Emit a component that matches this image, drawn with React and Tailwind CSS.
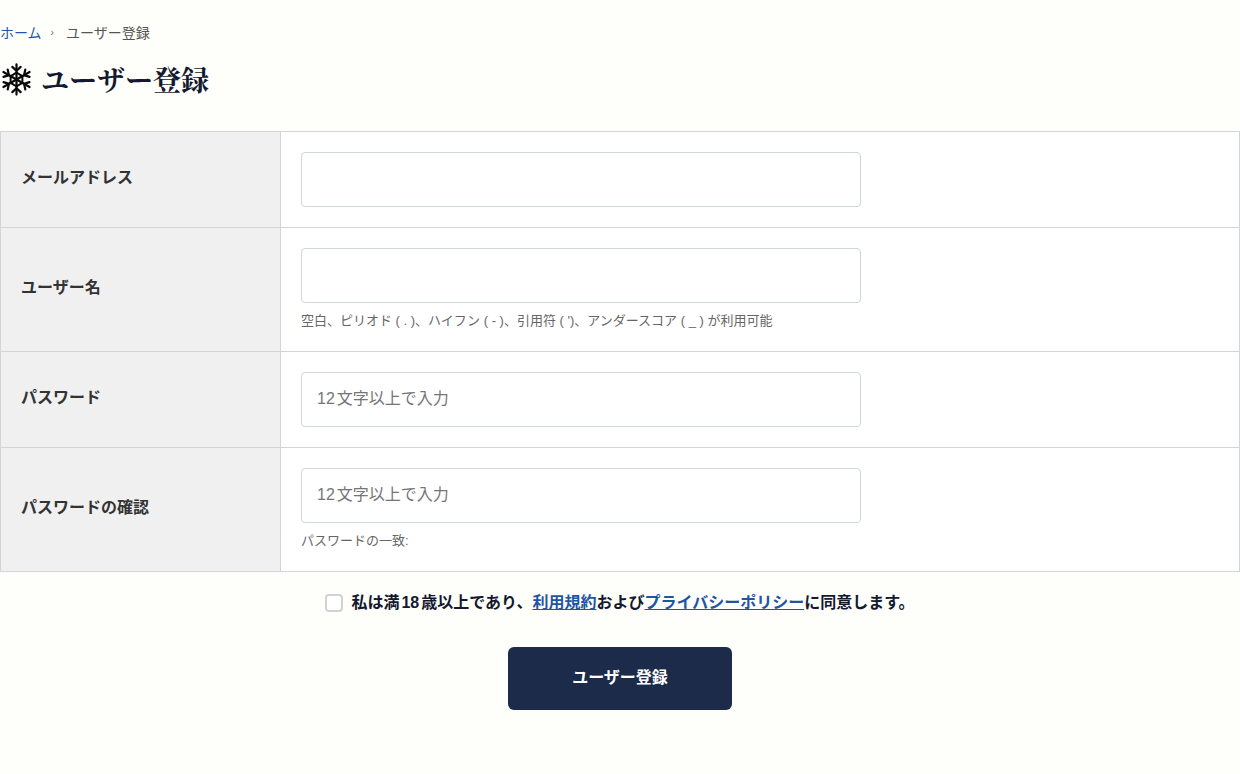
import React, { useState } from 'react';

const fields = [
  { id: 'email', label: 'メールアドレス', type: 'email' },
  {
    id: 'username',
    label: 'ユーザー名',
    type: 'text',
    hint: "空白、ピリオド ( . )、ハイフン ( - )、引用符 ( ')、アンダースコア ( _ ) が利用可能",
  },
  { id: 'password', label: 'パスワード', type: 'password', placeholder: '12文字以上で入力' },
  {
    id: 'passwordConfirm',
    label: 'パスワードの確認',
    type: 'password',
    placeholder: '12文字以上で入力',
    hint: 'パスワードの一致:',
  },
];

const arms = [0, 60, 120, 180, 240, 300];

const Snowflake = () => (
  <svg
    viewBox="0 0 33 34"
    className="h-[34px] w-[33px] shrink-0"
    fill="none"
    stroke="#0a0a0a"
    strokeWidth="2.2"
    strokeLinecap="round"
    aria-hidden="true"
  >
    {arms.map((angle) => (
      <g key={angle} transform={`rotate(${angle} 16.5 17.5)`}>
        <path d="M16.5 17.5V2.4" />
        <path d="M12.3 4.9 16.5 8.8 20.7 4.9" />
        <path d="M16.5 10.7 22.4 14.1" strokeWidth="2" />
      </g>
    ))}
  </svg>
);

const FieldRow = ({ field, value, onChange }) => (
  <tr>
    <th
      scope="row"
      className="w-[280px] border border-[#cfd6d8] bg-[#f0f0f0] px-5 pb-[3px] text-left align-middle font-bold text-[#333]"
    >
      <label htmlFor={field.id}>{field.label}</label>
    </th>
    <td className="border border-[#cfd6d8] bg-white p-5">
      <input
        id={field.id}
        type={field.type}
        value={value}
        placeholder={field.placeholder}
        onChange={(e) => onChange(field.id, e.target.value)}
        className="block h-[55px] w-full max-w-[560px] rounded border border-[#cfd6d8] bg-white px-[15px] pb-0.5 text-base placeholder:text-[#757575]"
      />
      {field.hint && <p className="mt-2 text-[13px] leading-5 text-[#666]">{field.hint}</p>}
    </td>
  </tr>
);

const App = () => {
  const [values, setValues] = useState({ email: '', username: '', password: '', passwordConfirm: '' });
  const [agreed, setAgreed] = useState(false);

  const handleChange = (id, value) => {
    setValues((prev) => ({ ...prev, [id]: value }));
  };

  return (
    <main className="min-h-screen bg-[#fefffb] pt-[23px] pb-16 font-['Liberation_Sans','Noto_Sans_CJK_JP',sans-serif] text-base text-[#14192f] [text-autospace:normal]">
      <nav aria-label="パンくず" className="flex items-center text-sm leading-5">
        <a href="#home" className="text-[#1f55a5]">ホーム</a>
        <span className="mr-3 ml-[9px] text-[10px] text-[#666]">›</span>
        <span className="text-[#555]">ユーザー登録</span>
      </nav>

      <h1 className="mt-4 flex items-center gap-2 font-['Noto_Serif_CJK_JP','Noto_Sans_CJK_JP',serif] text-[28px] leading-10 font-bold">
        <Snowflake />
        ユーザー登録
      </h1>

      <form onSubmit={(e) => e.preventDefault()} className="mt-8">
        <table className="w-full border-collapse">
          <tbody>
            {fields.map((field) => (
              <FieldRow key={field.id} field={field} value={values[field.id]} onChange={handleChange} />
            ))}
          </tbody>
        </table>

        <div className="mt-[19px] flex items-center justify-center gap-2 leading-6 font-semibold">
          <input
            id="agree"
            type="checkbox"
            checked={agreed}
            onChange={(e) => setAgreed(e.target.checked)}
            className="size-[18px] shrink-0 appearance-none rounded border-2 border-[#d0d3d6] bg-white checked:bg-[#1c2b4a]"
          />
          <label htmlFor="agree">
            私は満18歳以上であり、
            <a href="#terms" className="text-[#1f55a5] underline">利用規約</a>
            および
            <a href="#privacy" className="text-[#1f55a5] underline">プライバシーポリシー</a>
            に同意します。
          </label>
        </div>

        <div className="mt-8 flex justify-center">
          <button type="submit" className="h-[63px] rounded-md bg-[#1c2b4a] px-16 pb-0.5 font-bold text-white">
            ユーザー登録
          </button>
        </div>
      </form>
    </main>
  );
};

export default App;
